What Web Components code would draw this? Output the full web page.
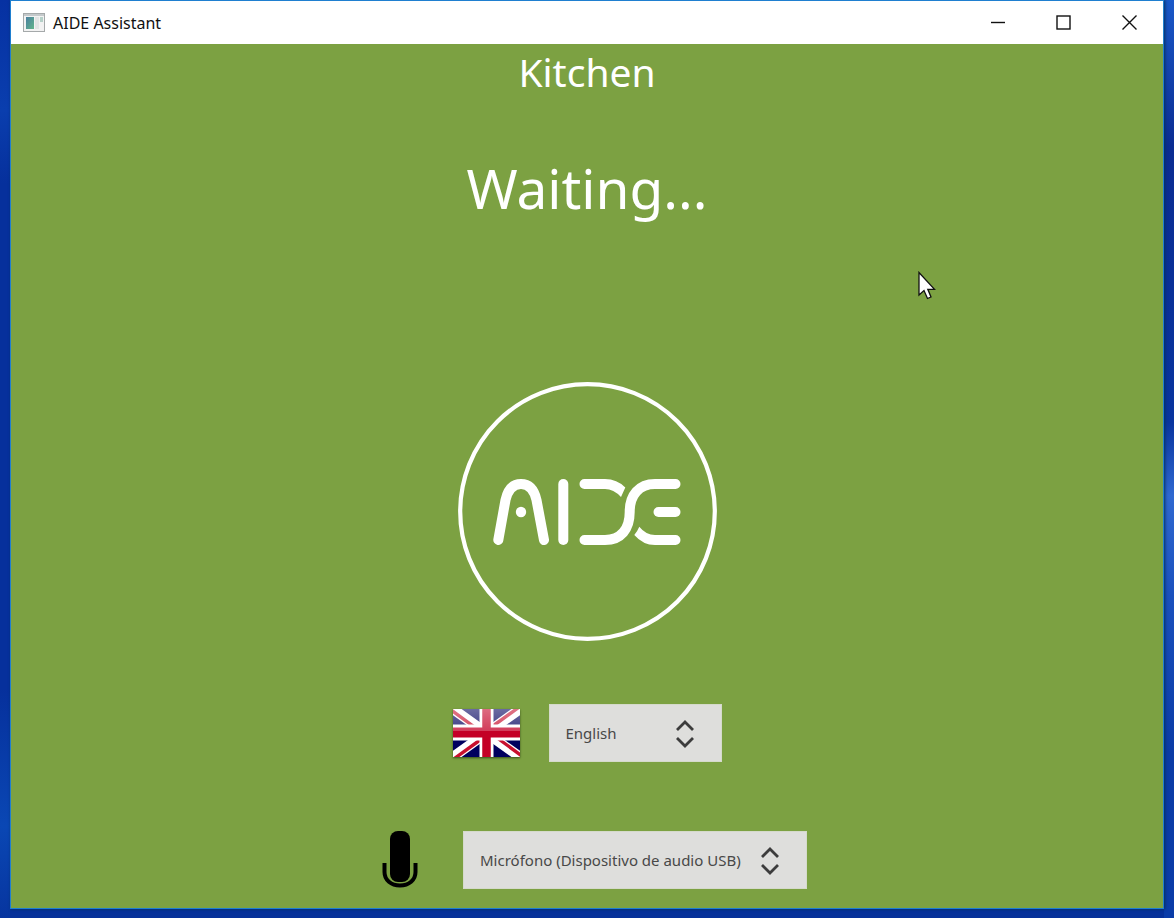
<!DOCTYPE html>
<html lang="en">
<head>
<meta charset="utf-8">
<meta name="viewport" content="width=device-width, initial-scale=1">
<title>AIDE Assistant</title>
<style>
  html, body { margin: 0; height: 100%; }
  body { font-family: "Noto Sans", "Open Sans", sans-serif; }
</style>
</head>
<body>
<aide-desktop>
  <app-window caption="AIDE Assistant">
    <status-heading room="Kitchen" status="Waiting..."></status-heading>
    <aide-logo></aide-logo>
    <setting-row class="language" label="Language" value="English">
      <flag-icon></flag-icon>
    </setting-row>
    <setting-row class="microphone" label="Microphone" value="Micrófono (Dispositivo de audio USB)" wide>
      <mic-icon></mic-icon>
    </setting-row>
  </app-window>
  <mouse-pointer slot="pointer"></mouse-pointer>
</aide-desktop>

<script>
const define = (name, html, setup) => {
  customElements.define(name, class extends HTMLElement {
    constructor() {
      super();
      const template = document.createElement('template');
      template.innerHTML = html;
      this.attachShadow({ mode: 'open' }).append(template.content.cloneNode(true));
    }
    connectedCallback() { if (setup) setup(this, this.shadowRoot); }
  });
};

define('aide-desktop', `
  <style>
    :host {
      display: flex; position: relative; box-sizing: border-box; min-height: 100vh;
      padding: 0 10px 9px; overflow: hidden;
      background:
        linear-gradient(#0631a2, #0a3eae 12%, #06309c 20%, #06309c 75%, #0a47b4 90%, #07359f) left / 10px 100% no-repeat,
        linear-gradient(#1a58c8, #0a2c92 16%, #08349f 46%, #2f68d0 54%, #1a50bd 65%, #0a3ba6 82%, #0a3ca8) right / 10px 100% no-repeat,
        #06319a;
    }
    slot:not([name]) { display: flex; flex: 1; }
    ::slotted(app-window) { flex: 1; }
  </style>
  <slot></slot><slot name="pointer"></slot>
`);

define('app-window', `
  <style>
    :host {
      display: flex; flex-direction: column; box-sizing: border-box; min-width: 0;
      border: 1px solid #1f7fd0; background: #7ca142;
      box-shadow: 1px 0 3px #04305c;
    }
    header { display: flex; align-items: center; height: 43px; padding-left: 12px; background: #fff; color: #111; }
    h1 { flex: 1; margin: 0 0 0 8px; font: 16px/24px "Noto Sans", sans-serif; }
    button { display: grid; place-items: center; width: 66px; height: 43px; padding: 0; border: 0; background: none; }
    main { display: flex; flex: 1; flex-direction: column; align-items: center; }
    ::slotted(aide-logo) { margin-top: 154px; }
    ::slotted(.language) { margin-top: 62px; }
    ::slotted(.microphone) { margin: 69px 0 19px; }
    svg { display: block; }
  </style>
  <header>
    <svg width="22" height="20" viewBox="0 0 22 20" aria-hidden="true">
      <defs><linearGradient id="pane" x2="1" y2="1"><stop stop-color="#4a7fa0"/><stop offset="1" stop-color="#62b58a"/></linearGradient></defs>
      <rect x=".5" y=".5" width="21" height="18" fill="#f2f2f2" stroke="#a5a9aa"/>
      <path d="M1 2h20" stroke="#c4c9cb" stroke-width="2"/>
      <rect x="3" y="4" width="8" height="12" fill="url(#pane)"/>
      <rect x="12" y="4" width="4" height="12" fill="#e2e4e4"/>
      <rect x="17" y="4" width="3" height="5" fill="#b5d0c8"/>
    </svg>
    <h1></h1>
    <button aria-label="Minimize"><svg width="16" height="16"><path d="M1 7.500h14" stroke="#111" stroke-width="1.4"/></svg></button>
    <button aria-label="Maximize"><svg width="16" height="16"><rect x="1" y="1" width="13" height="13" fill="none" stroke="#111" stroke-width="1.4"/></svg></button>
    <button aria-label="Close"><svg width="16" height="16"><path d="M.5 .5l14 14M14.500 .5L.5 14.500" stroke="#111" stroke-width="1.4"/></svg></button>
  </header>
  <main><slot></slot></main>
`, (el, root) => { root.querySelector('h1').textContent = el.getAttribute('caption'); });

define('status-heading', `
  <style>
    :host { display: block; color: #fff; text-align: center; }
    h2, p { margin: 0; font-weight: 400; }
    h2 { font-size: 39px; line-height: 56px; }
    p { margin-top: 48px; font-size: 55px; line-height: 80px; }
  </style>
  <h2></h2><p role="status"></p>
`, (el, root) => {
  root.querySelector('h2').textContent = el.getAttribute('room');
  root.querySelector('p').textContent = el.getAttribute('status');
});

define('aide-logo', `
  <style>:host, svg { display: block; }</style>
  <svg width="260" height="260" viewBox="-1 0 260 260" role="img" aria-label="AIDE">
    <circle cx="129.5" cy="129.5" r="127.3" fill="none" stroke="#fff" stroke-width="4.2"/>
    <g fill="none" stroke="#fff" stroke-width="10" stroke-linecap="round">
      <path d="M40.3 158L47.5 118C50 107 55 102 63 102S76 107 78.5 118L86 158"/>
      <path d="M105.3 102V158"/>
      <path d="M126.500 158H147C163 158 171.700 147 171.700 130S181 102 197 102H217.500"/>
      <path d="M200.500 130H217.500"/>
    </g>
    <g fill="#fff">
      <circle cx="63" cy="130" r="5.200"/>
      <path d="M126.500 97H147Q159 97 167.300 105.500L163 115Q155.500 107 147 107H126.500A5 5 0 0 1 126.500 97Z"/>
      <path d="M217.500 153H197Q188 153 181.300 144.700Q179 150 176.300 153Q185 163 197 163H217.500A5 5 0 0 0 217.500 153Z"/>
    </g>
  </svg>
`);

define('setting-row', `
  <style>
    :host { display: grid; grid-template-columns: 67px 173px; align-items: center; column-gap: 29px; }
    :host([wide]) { grid-template-columns: 67px 344px; }
    .icon { display: grid; place-items: center; }
    .field { position: relative; }
    select {
      appearance: none; display: block; box-sizing: border-box; width: 100%; height: 58px; margin: 0;
      padding: 0 56px 0 16px; border: 1px solid #d5dacb; border-radius: 0;
      background: #dededc; color: #484848; font: 15px/24px "Noto Sans", sans-serif;
    }
    svg { position: absolute; right: 27px; top: 15px; pointer-events: none; }
  </style>
  <label class="icon" for="choice"><slot></slot></label>
  <div class="field">
    <select id="choice"><option></option></select>
    <svg width="20" height="30" viewBox="0 0 20 30" fill="none" stroke="#3c3c3c" stroke-width="2.800" aria-hidden="true">
      <path d="M2 11L10 3L18 11M2 19L10 27L18 19"/>
    </svg>
  </div>
`, (el, root) => {
  root.querySelector('option').textContent = el.getAttribute('value');
  root.querySelector('select').setAttribute('aria-label', el.getAttribute('label'));
});

define('flag-icon', `
  <style>:host, svg { display: block; } svg { box-shadow: 0 1px 2px #35501a; }</style>
  <svg width="67" height="48" viewBox="0 0 67 48" role="img" aria-label="United Kingdom">
    <defs>
      <linearGradient id="gloss" x2="0" y2="1"><stop stop-color="#fff" stop-opacity=".42"/><stop offset="1" stop-color="#fff" stop-opacity=".24"/></linearGradient>
    </defs>
    <rect width="67" height="48" fill="#00005e"/>
    <path d="M0 0L67 48M67 0L0 48" stroke="#fff" stroke-width="10"/>
    <path d="M-2 1L31 25M69 -4L33 22M69 47L36 23M-2 52L34 26" stroke="#c8102e" stroke-width="3.400"/>
    <path d="M33.500 0V48" stroke="#fff" stroke-width="14"/>
    <path d="M0 23.500H67" stroke="#fff" stroke-width="16"/>
    <path d="M33.500 0V48" stroke="#c40026" stroke-width="8.500"/>
    <path d="M0 23.500H67" stroke="#c40026" stroke-width="10"/>
    <rect width="67" height="22" fill="url(#gloss)"/>
  </svg>
`);

define('mic-icon', `
  <style>:host, svg { display: block; }</style>
  <svg width="37" height="58" viewBox="0 0 37 58" role="img" aria-label="Microphone">
    <rect x="8" y="0" width="20" height="51" rx="8" fill="#000"/>
    <path d="M2.500 32V41C2.500 49 9 54.500 18 54.500S33.500 49 33.500 41V32" fill="none" stroke="#000" stroke-width="4"/>
  </svg>
`);

define('mouse-pointer', `
  <style>:host { position: absolute; left: 918px; top: 271px; pointer-events: none; } svg { display: block; }</style>
  <svg width="18" height="29" viewBox="0 0 18 29" aria-hidden="true">
    <path d="M1 1.500V24L6 19.500L9.500 27.500L13 26L9.800 18.300H16.500Z" fill="#fff" stroke="#111" stroke-width="1.300"/>
  </svg>
`);
</script>
</body>
</html>
